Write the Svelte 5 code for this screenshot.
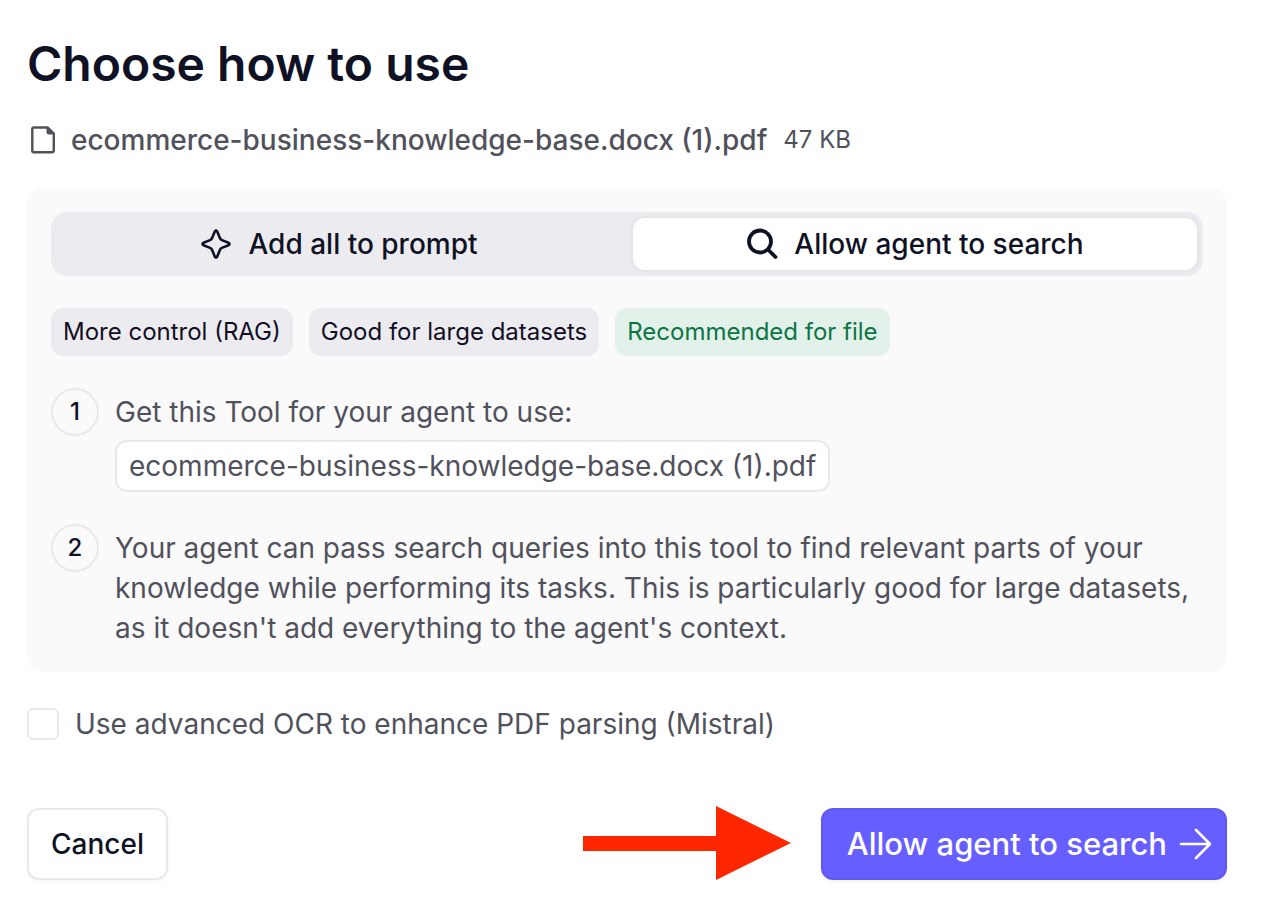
<script lang="ts">
  type Mode = "prompt" | "search";

  const file = {
    name: "ecommerce-business-knowledge-base.docx (1).pdf",
    size: "47 KB",
  };

  let mode: Mode = $state("search");
  let useOcr = $state(false);
</script>

<main class="dialog">
  <h1>Choose how to use</h1>

  <div class="file">
    <svg class="icon page" viewBox="0 0 32 32" aria-hidden="true">
      <path
        d="M6.800 3.500h14l6 6v16.800a2 2 0 0 1-2 2h-18a1.500 1.500 0 0 1-1.500-1.500v-21.800a1.500 1.500 0 0 1 1.500-1.500z"
      />
      <path class="fold" d="M20 3.500v5a1.500 1.500 0 0 0 1.500 1.500h5z" />
    </svg>
    <span class="file-name">{file.name}</span>
    <span class="file-size">{file.size}</span>
  </div>

  <section class="panel">
    <div class="modes">
      <button
        class="mode"
        class:active={mode === "prompt"}
        onclick={() => (mode = "prompt")}
      >
        <svg class="icon" viewBox="0 0 32 32" aria-hidden="true">
          <path
            d="M16 2.500c.6 0 1 .4 1.200 1l2.700 6.600c.4 1 1 1.600 2 2l6.600 2.700c.6.200 1 .6 1 1.200s-.4 1-1 1.200l-6.600 2.700c-1 .4-1.600 1-2 2l-2.700 6.600c-.2.600-.6 1-1.200 1s-1-.4-1.200-1l-2.700-6.600c-.4-1-1-1.600-2-2l-6.600-2.700c-.6-.2-1-.6-1-1.200s.4-1 1-1.200l6.600-2.700c1-.4 1.600-1 2-2l2.700-6.600c.2-.6.6-1 1.200-1z"
          />
        </svg>
        Add all to prompt
      </button>
      <button
        class="mode"
        class:active={mode === "search"}
        onclick={() => (mode = "search")}
      >
        <svg class="icon bold" viewBox="0 0 32 32" aria-hidden="true">
          <circle cx="14" cy="13.500" r="11" />
          <path d="M22 21.500l7.500 7.500" />
        </svg>
        Allow agent to search
      </button>
    </div>

    <div class="tags">
      <span class="tag">More control (RAG)</span>
      <span class="tag">Good for large datasets</span>
      <span class="tag recommended">Recommended for file</span>
    </div>

    <ol class="steps">
      <li>
        <span class="number">1</span>
        <div class="step-text">
          Get this Tool for your agent to use:
          <span class="chip">{file.name}</span>
        </div>
      </li>
      <li>
        <span class="number">2</span>
        <div class="step-text">
          Your agent can pass search queries into this tool to find relevant
          parts of your knowledge while performing its tasks. This is
          particularly good for large datasets, as it doesn't add everything to
          the agent's context.
        </div>
      </li>
    </ol>
  </section>

  <div class="option">
    <input id="ocr" type="checkbox" bind:checked={useOcr} />
    <label for="ocr">Use advanced OCR to enhance PDF parsing (Mistral)</label>
  </div>

  <footer>
    <button class="button">Cancel</button>
    <div class="confirm">
      <svg class="pointer" viewBox="0 0 208 74" aria-hidden="true">
        <path d="M0 30h133V0l75 37-75 37V45H0z" />
      </svg>
      <button class="button primary">
        Allow agent to search
        <svg class="icon" viewBox="0 0 32 32" aria-hidden="true">
          <path d="M2 16h28M17 2l14 14-14 14" />
        </svg>
      </button>
    </div>
  </footer>
</main>

<style>
  :global(body) {
    margin: 0;
    background: #fff;
  }

  .dialog {
    padding: 36px 35px 32px 27px;
    font-family: Inter, "Liberation Sans", sans-serif;
    font-size: 28px;
    line-height: 40px;
    color: #51515c;
  }

  h1 {
    margin: 0 0 28px;
    font-size: 48px;
    font-weight: 600;
    line-height: 56px;
    color: #0f1225;
  }

  button,
  input {
    margin: 0;
    font: inherit;
  }

  button {
    cursor: pointer;
  }

  .icon {
    flex: none;
    width: 32px;
    height: 32px;
    fill: none;
    stroke: currentColor;
    stroke-width: 2.6;
    stroke-linecap: round;
    stroke-linejoin: round;
  }

  .icon.bold {
    stroke-width: 3.8;
  }

  .icon.page {
    stroke-width: 2.4;
  }

  .file {
    display: flex;
    align-items: center;
    gap: 12px;
  }

  .file-name {
    font-weight: 500;
  }

  .file-size {
    margin-left: 4px;
    font-size: 24px;
  }

  .icon .fold {
    fill: currentColor;
    stroke-width: 1;
  }

  .panel {
    margin-top: 28px;
    padding: 24px;
    border-radius: 16px;
    background: #fafafb;
  }

  .modes {
    display: grid;
    grid-template-columns: 1fr 1fr;
    gap: 12px;
    padding: 6px;
    border-radius: 16px;
    background: #ececf0;
  }

  .mode {
    display: flex;
    align-items: center;
    justify-content: center;
    gap: 16px;
    height: 52px;
    border: none;
    border-radius: 12px;
    background: transparent;
    font-weight: 500;
    color: #0f1225;
  }

  .mode.active {
    background: #fff;
    box-shadow: 0 0 6px #00000012;
  }

  .tags {
    display: flex;
    flex-wrap: wrap;
    gap: 16px;
    margin-top: 32px;
  }

  .tag {
    padding: 4px 12px;
    border-radius: 12px;
    background: #ececf0;
    font-size: 24px;
    color: #120f25;
  }

  .tag.recommended {
    background: #e2f1e9;
    color: #0d7544;
  }

  .steps {
    display: grid;
    gap: 32px;
    margin: 32px 0 0;
    padding: 0;
    list-style: none;
  }

  .steps li {
    display: flex;
    gap: 16px;
  }

  .number {
    display: flex;
    flex: none;
    align-items: center;
    justify-content: center;
    box-sizing: border-box;
    width: 48px;
    height: 48px;
    border: 2px solid #e9e9ec;
    border-radius: 50%;
    font-size: 24px;
    font-weight: 500;
    color: #0f1225;
  }

  .step-text {
    padding-top: 4px;
  }

  .chip {
    display: block;
    width: fit-content;
    margin-top: 8px;
    padding: 4px 12px;
    border: 2px solid #e9e9ec;
    border-radius: 12px;
    background: #fff;
  }

  .option {
    display: flex;
    align-items: center;
    gap: 16px;
    margin-top: 32px;
  }

  .option input {
    appearance: none;
    width: 32px;
    height: 32px;
    border: 2px solid #e9e9ec;
    border-radius: 6px;
    background: #fff;
  }

  .option input:checked {
    border-color: #665eff;
    background: #665eff;
  }

  footer,
  .confirm {
    display: flex;
    align-items: center;
    justify-content: space-between;
  }

  footer {
    margin-top: 64px;
  }

  .confirm {
    gap: 30px;
  }

  .pointer {
    flex: none;
    width: 208px;
    height: 74px;
    margin: -2px 0 0;
    fill: #ff2600;
  }

  .button {
    display: flex;
    align-items: center;
    gap: 12px;
    box-sizing: border-box;
    height: 72px;
    padding: 0 22px;
    border: 2px solid #e9e9ec;
    border-radius: 12px;
    background: #fff;
    box-shadow: 0 2px 4px #0000000a;
    font-weight: 500;
    color: #0f1225;
  }

  .button.primary {
    padding: 0 14px 0 24px;
    border-color: #6159f2;
    background: #665eff;
    font-size: 31px;
    color: #fff;
  }
</style>
